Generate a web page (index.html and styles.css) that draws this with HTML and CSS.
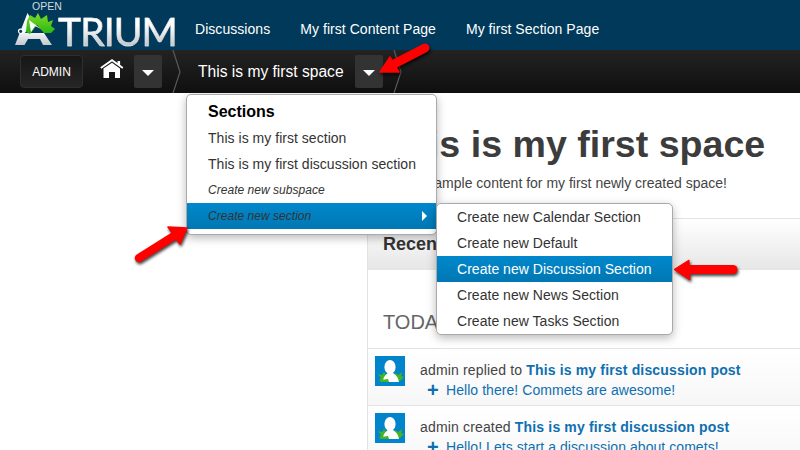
FILE: index.html
```html
<!DOCTYPE html>
<html lang="en">
<head>
<meta charset="utf-8">
<title>Open Atrium</title>
<link rel="stylesheet" href="styles.css">
</head>
<body>
<header class="topbar">
  <div class="logo">
    <span class="logo-open">OPEN</span>
    <svg class="logo-a" width="46" height="34" viewBox="0 0 46 34">
      <defs>
        <linearGradient id="ag" x1="0" y1="0" x2="0" y2="1"><stop offset="0" stop-color="#fff"/><stop offset=".6" stop-color="#f4f5f6"/><stop offset="1" stop-color="#c4c8cc"/></linearGradient>
        <linearGradient id="lg" x1="0" y1="0" x2="0" y2="1"><stop offset="0" stop-color="#7fdc22"/><stop offset="1" stop-color="#25b512"/></linearGradient>
      </defs>
      <path d="M0 33 L12.5 1 L17 9 L10 21 H29 L37 33 H28 L25 27 H13 L9.5 33 Z" fill="url(#ag)"/>
      <path d="M12 9 L15 3 L20 6 L23 1 L26 7 L32 3 L33 10 L38 8 L36 14 L40 17 L36 21 L29 21 L22 13 L15 22 L11 20 Z" fill="url(#lg)"/>
      <path d="M14 8 L26 17 L20 14 L16 20 Z" fill="#fff"/>
      <circle cx="5.7" cy="19.3" r="2.2" fill="#00395a" stroke="#fff" stroke-width="1.2"/>
    </svg>
    <span class="logo-trium">TRIUM</span>
  </div>
  <nav class="mainnav">
    <a>Discussions</a>
    <a>My first Content Page</a>
    <a>My first Section Page</a>
  </nav>
</header>
<div class="subbar">
  <button class="admin">ADMIN</button>
  <svg class="home" width="24" height="22" viewBox="0 0 24 22">
    <path d="M.8 10 L12 2.2 L22.8 10" fill="none" stroke="#fff" stroke-width="1.9"/>
    <rect x="17.5" y="3" width="2.6" height="4" fill="#fff"/>
    <path d="M3.5 10.5 L12 4.8 L20 10.5 V20 H15 V14 H9 V20 H3.5 Z" fill="#fff"/>
  </svg>
  <span class="caret-btn"><i class="caret"></i></span>
  <svg class="chev" width="9" height="43" viewBox="0 0 9 43"><path d="M1 0 L8 22 L1 43" fill="none" stroke="#5a5a5a" stroke-width="1.2"/></svg>
  <span class="space-title">This is my first space</span>
  <span class="caret-btn"><i class="caret"></i></span>
  <svg class="chev" width="9" height="43" viewBox="0 0 9 43"><path d="M1 0 L8 22 L1 43" fill="none" stroke="#5a5a5a" stroke-width="1.2"/></svg>
</div>
<main class="page">
  <div class="content">
    <h1>This is my first space</h1>
    <p class="lead">This is sample content for my first newly created space!</p>
    <section class="activity">
      <h2>Recent Activity</h2>
      <h3>TODAY</h3>
      <div class="row">
        <svg class="avatar" width="30" height="30" viewBox="0 0 30 30"><use href="#av"/></svg>
        <div class="row-text">
          <div class="line">admin replied to <a class="strong">This is my first discussion post</a></div>
          <div class="sub"><span class="plus">+</span><a>Hello there! Commets are awesome!</a></div>
        </div>
      </div>
      <div class="row">
        <svg class="avatar" width="30" height="30" viewBox="0 0 30 30">
          <g id="av">
            <rect width="30" height="30" fill="#0085cc"/>
            <path d="M3 18 L7 19 L9 16 L12 20 L13 25 L4 25 L6 22 Z" fill="#43b51e"/>
            <path d="M19 21 L20 17 L23 19 L27 16 L26 20 L29 21 L25 25 L20 25 Z" fill="#43b51e"/>
            <ellipse cx="15" cy="11" rx="5.6" ry="7" fill="#fff"/>
            <path d="M8 26 Q8 20 13 17 H18 Q23 20 24 26 Z" fill="#fff"/>
            <path d="M6 24 L13 23 L14 26 L5 26 Z" fill="#43b51e"/>
          </g>
        </svg>
        <div class="row-text">
          <div class="line">admin created <a class="strong">This is my first discussion post</a></div>
          <div class="sub"><span class="plus">+</span><a>Hello! Lets start a discussion about comets!</a></div>
        </div>
      </div>
    </section>
  </div>
</main>
<div class="menu menu-sections">
  <div class="menu-head">Sections</div>
  <a class="item">This is my first section</a>
  <a class="item">This is my first discussion section</a>
  <a class="item em">Create new subspace</a>
  <a class="item em active dim">Create new section<i class="sub-arrow"></i></a>
</div>
<div class="menu menu-create">
  <a class="item">Create new Calendar Section</a>
  <a class="item">Create new Default</a>
  <a class="item active">Create new Discussion Section</a>
  <a class="item">Create new News Section</a>
  <a class="item">Create new Tasks Section</a>
</div>
<svg class="arrow arrow-1" width="60" height="40" viewBox="0 0 60 40">
  <path d="M18 22 L49 6" stroke="#f00" stroke-width="9" stroke-linecap="round"/>
  <path d="M4 30 L14 15 L23 30 Z" fill="#f00" stroke="#f00" stroke-width="1.5" stroke-linejoin="round"/>
</svg>
<svg class="arrow arrow-2" width="60" height="42" viewBox="0 0 60 42">
  <path d="M42 12 L7 34" stroke="#f00" stroke-width="8.5" stroke-linecap="round"/>
  <path d="M55 4 L36 3 L48 20 Z" fill="#f00" stroke="#f00" stroke-width="1.5" stroke-linejoin="round"/>
</svg>
<svg class="arrow arrow-3" width="72" height="30" viewBox="0 0 72 30">
  <path d="M18 13.5 L62 13.5" stroke="#f00" stroke-width="9" stroke-linecap="round"/>
  <path d="M3 13.5 L18 4 L19 24 Z" fill="#f00" stroke="#f00" stroke-linejoin="round"/>
</svg>
</body>
</html>
```
FILE: styles.css
```css
* { box-sizing: border-box; }
html, body { margin: 0; padding: 0; }
body {
  position: relative;
  width: 800px;
  height: 450px;
  overflow: hidden;
  background: #fff;
  font-family: "Liberation Sans", Arial, sans-serif;
  font-size: 14px;
  color: #444;
}
.topbar {
  height: 50px;
  background: #00395a;
  display: flex;
  align-items: flex-start;
}
.logo {
  position: relative;
  width: 195px;
  height: 50px;
  flex: none;
}
.logo-open {
  position: absolute;
  left: 32px;
  top: 0;
  font: 400 10.5px/12px "Liberation Sans", sans-serif;
  color: #d5dade;
}
.logo-a { position: absolute; left: 15px; top: 12px; }
.logo-trium {
  position: absolute;
  left: 58px;
  top: 11px;
  font: 400 39px/40px Lato, sans-serif;
  letter-spacing: -.9px;
  background: linear-gradient(#fff 35%, #c4c8cc 85%);
  -webkit-background-clip: text;
  background-clip: text;
  color: transparent;
  -webkit-text-stroke: .5px rgba(235, 238, 240, .85);
}
.mainnav {
  display: flex;
  gap: 30px;
  padding-top: 21px;
  color: #fff;
  font-size: 14px;
  line-height: 17px;
  letter-spacing: .05px;
}
.subbar {
  height: 43px;
  background: linear-gradient(#232323, #0f0f0f);
  display: flex;
  align-items: center;
  padding-left: 20px;
  color: #fff;
}
.admin {
  width: 63px;
  height: 33px;
  padding: 0;
  border: 1px solid #2e2e2e;
  border-radius: 4px;
  background: linear-gradient(#161616, #262626);
  color: #fff;
  font: 12px "Liberation Sans", sans-serif;
}
.home { margin: -5px -1px 0 17px; flex: none; }
.caret-btn {
  width: 28px;
  height: 33px;
  margin-left: 12px;
  background: #333;
  border-radius: 2px;
  display: flex;
  align-items: center;
  justify-content: center;
  flex: none;
}
.home + .caret-btn { margin-left: 11px; }
.caret {
  width: 0;
  height: 0;
  margin-top: 3px;
  border-left: 6px solid transparent;
  border-right: 6px solid transparent;
  border-top: 6px solid #fff;
}
.chev { margin-left: 10px; flex: none; }
.space-title {
  margin-left: 17px;
  width: 145px;
  font-size: 15.6px;
  white-space: nowrap;
}
.page {
  display: flex;
  justify-content: flex-end;
}
.content {
  width: 433px;
}
h1 {
  margin: 31px 0 0 16px;
  font-size: 37.6px;
  line-height: 40px;
  font-weight: 700;
  color: #3c3c3c;
  white-space: nowrap;
}
.lead {
  margin: 9px 0 0 16px;
  font-size: 14px;
  line-height: 20px;
  white-space: nowrap;
}
.activity {
  margin-top: 25px;
  border-left: 1px solid #e3e3e3;
  border-top: 1px solid #e3e3e3;
}
h2 {
  margin: 0;
  height: 51px;
  padding: 0 0 0 15px;
  background: linear-gradient(#fff, #e6e6e6);
  font-size: 18px;
  line-height: 51px;
  color: #333;
  white-space: nowrap;
}
h3 {
  margin: 0;
  padding: 27px 0 0 15px;
  height: 78px;
  font-size: 20px;
  font-weight: 400;
  line-height: 50px;
  color: #666;
}
.row {
  display: flex;
  height: 57px;
  padding: 7px 0 0 7px;
  gap: 15px;
  border-top: 1px solid #e3e3e3;
  background: linear-gradient(#fff, #f7f7f7);
}
.avatar { flex: none; }
.row-text { line-height: 20px; padding-top: 4px; white-space: nowrap; }
.line { letter-spacing: .16px; }
.sub { display: flex; align-items: center; letter-spacing: .06px; }
.plus {
  width: 26px;
  padding-left: 7px;
  font-size: 20px;
  font-weight: 700;
  line-height: 20px;
  color: #0f6fb0;
}
.row-text a { color: #0f6fb0; }
.row-text .strong { font-weight: 700; }
.menu {
  position: absolute;
  background: #fff;
  border: 1px solid #aaa;
  border-radius: 5px;
  box-shadow: 0 3px 10px rgba(0, 0, 0, .28);
}
.menu-sections { left: 186px; top: 94px; width: 251px; height: 141px; padding-top: 4px; z-index: 1; }
.menu-create { left: 436px; top: 203px; width: 237px; height: 132px; z-index: 2; }
.menu-head {
  height: 26px;
  padding-left: 21px;
  font-size: 16px;
  font-weight: 700;
  line-height: 25px;
  color: #000;
}
.item {
  position: relative;
  display: block;
  height: 26px;
  padding-left: 21px;
  line-height: 26px;
  color: #333;
  white-space: nowrap;
  letter-spacing: .03px;
}
.menu-create .item { padding-left: 20px; }
.item.em { font-size: 12px; font-style: italic; }
.item.active { background: linear-gradient(#0088cc, #0077b3); color: #fff; }
.item.active.dim { color: #333; }
.sub-arrow {
  position: absolute;
  right: 9px;
  top: 8px;
  width: 0;
  height: 0;
  border-top: 5px solid transparent;
  border-bottom: 5px solid transparent;
  border-left: 5px solid #fff;
}
.arrow {
  position: absolute;
  z-index: 3;
  filter: drop-shadow(1px 2px 1.5px rgba(0, 0, 0, .75));
}
.arrow-1 { left: 376px; top: 42px; }
.arrow-2 { left: 132px; top: 224px; }
.arrow-3 { left: 671px; top: 256px; }
```
